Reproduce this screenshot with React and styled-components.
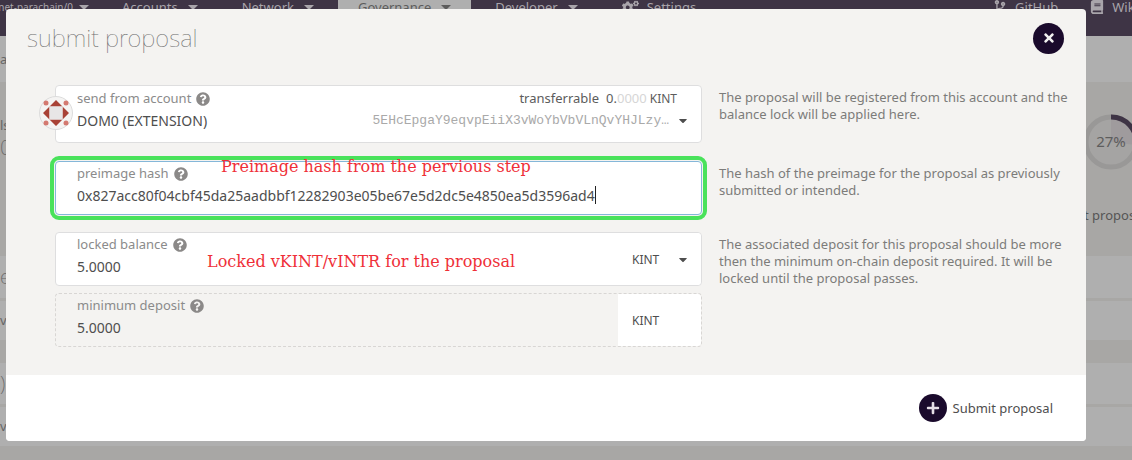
import React from "react";
import styled, { createGlobalStyle, css } from "styled-components";
import {
  FaBook,
  FaCaretDown,
  FaCodeBranch,
  FaCogs,
  FaPlus,
  FaQuestionCircle,
  FaTimes,
} from "react-icons/fa";

const GlobalStyle = createGlobalStyle`
  *, *::before, *::after { box-sizing: border-box; }
  body {
    margin: 0;
    background: #a8a7a5;
    color: #4e4e4e;
    font-family: "Noto Sans", "Open Sans", sans-serif;
    font-size: 13px;
    line-height: 17px;
    overflow: hidden;
  }
  button, input, select { font: inherit; color: inherit; }
`;

/* ---------- page behind the dialog ---------- */

const Page = styled.div`
  position: relative;
  min-height: 100vh;
  overflow: hidden;
`;

const Nav = styled.nav`
  display: flex;
  height: 36px;
  background: #3e3445;
  color: #a9a5ab;
`;

const NavLink = styled.a`
  display: flex;
  gap: ${(p) => (p.$icon ? 8 : 10)}px;
  height: 14px;
  align-items: center;
  margin-right: 4px;
  padding: 0 20px;
  color: inherit;
  text-decoration: none;
  white-space: nowrap;
  ${(p) =>
    p.$active &&
    css`
      height: 100%;
      padding-bottom: 22px;
      background: #afafaf;
      color: #5c5c5c;
    `}
`;

const ChainLink = styled(NavLink)`
  justify-content: flex-end;
  width: 98px;
  padding: 0 9px 0 0;
  gap: 6px;
  font-size: 10px;
`;

const NavEnd = styled.div`
  display: flex;
  margin-left: auto;
  margin-right: -24px;

  ${NavLink} {
    padding: 0 14px;
  }
`;

const Arrow = styled.span`
  border: 5px solid transparent;
  border-top-color: currentColor;
  border-bottom: 0;
`;

const Strip = styled.div`
  display: flex;
  align-items: center;
  height: ${(p) => p.$height}px;
  margin-bottom: ${(p) => p.$gap || 0}px;
  background: #afafaf;
  color: #666;
`;

const Thin = styled.span`
  font-size: 20px;
  font-weight: 200;
  line-height: 28px;
`;

const Summary = styled.section`
  display: flex;
  justify-content: space-between;
  height: 174px;
  color: #666;
`;

const SummaryStart = styled.div`
  padding-top: 35px;
`;

const SummaryEnd = styled.div`
  display: flex;
  flex-direction: column;
  width: 48px;
  padding-top: 32px;
  white-space: nowrap;
  gap: 37px;
  color: #555;
`;

const Gauge = styled.svg`
  width: 56px;
  height: 56px;
  flex: none;
`;

/* ---------- dialog ---------- */

const Dialog = styled.form`
  position: absolute;
  top: 9px;
  left: 6px;
  right: 46px;
  border-radius: 4px;
  overflow: hidden;
  background: #f4f3f1;
`;

const Header = styled.header`
  display: flex;
  align-items: center;
  justify-content: space-between;
  height: 58px;
  padding: 0 22px 0 21px;
`;

const Title = styled.h1`
  margin: 0;
  color: #6e6e6e;
  font-size: 24px;
  font-weight: 100;
  line-height: 30px;
`;

const RoundButton = styled.button`
  display: grid;
  place-items: center;
  width: 31px;
  height: 31px;
  padding: 0;
  border: 0;
  border-radius: 50%;
  background: #1a0a2c;
  color: #eee;
  font-size: 14px;
`;

const Body = styled.div`
  padding: 18px 14px 28px 49px;
`;

const Row = styled.div`
  display: grid;
  grid-template-columns: 647fr 353fr;
  column-gap: 17px;
  margin-bottom: ${(p) => p.$gap}px;
`;

const Help = styled.p`
  margin: 0;
  padding-top: 4px;
  color: #7c7c7a;
`;

const Stack = styled.div`
  display: grid;
  gap: 7px;
`;

const Field = styled.div`
  position: relative;
  display: flex;
  height: ${(p) => p.$height || 54}px;
  border: 1px ${(p) => (p.$readOnly ? "dashed #d8d6d4" : "solid #dededf")};
  border-radius: 4px;
  background: ${(p) => (p.$readOnly ? "transparent" : "#fff")};
  ${(p) =>
    p.$focused &&
    css`
      border-color: #85b7d9;
      outline: 4px solid #49e25b;
      outline-offset: 1px;
    `}
`;

const FieldMain = styled.div`
  flex: 1;
  min-width: 0;
  padding: ${(p) => p.$top || 3}px 0 0 21px;
`;

const LabelRow = styled.div`
  display: flex;
  align-items: center;
  gap: 5px;
  color: #8b8b8b;
`;

const HelpIcon = styled(FaQuestionCircle)`
  font-size: 14px;
  color: #8b8988;
`;

const ValueRow = styled.div`
  display: flex;
  align-items: center;
  height: 26px;
  font-size: 14px;
`;

const TextInput = styled.input`
  field-sizing: content;
  padding: 0;
  border: 0;
  outline: 0;
  background: transparent;
`;

const TextCursor = styled.span`
  width: 1px;
  height: 18px;
  background: #222;
`;

const Balance = styled.span`
  display: flex;
  gap: 3px;
  margin-left: auto;
  padding-right: 24px;
  color: #5c5c5c;
`;

const Amount = styled.span`
  margin-left: 4px;
`;

const Decimals = styled.span`
  color: #d6d6d6;
`;

const Unit = styled.span`
  font-size: 12px;
`;

const AccountSelect = styled.select`
  flex: 1;
  min-width: 0;
  padding: 0;
  border: 0;
  appearance: none;
  background: transparent;
`;

const Address = styled.span`
  color: #a9a9a9;
  font-family: "Liberation Mono", monospace;
  font-size: 13px;
`;

const DropCaret = styled(FaCaretDown)`
  flex: none;
  width: 12px;
  margin: 0 12px 0 8px;
  font-size: 13px;
`;

const UnitBox = styled.div`
  display: flex;
  align-items: center;
  width: 83px;
  padding-left: 14px;
  border-radius: 0 4px 4px 0;
  background: #fff;
  font-size: 12px;
`;

const UnitSelect = styled.select`
  flex: 1;
  min-width: 0;
  padding: 0;
  border: 0;
  appearance: none;
  background: transparent;
`;

const Avatar = styled.svg`
  position: absolute;
  left: -17px;
  top: 10px;
  width: 34px;
  height: 34px;
`;

const Note = styled.span`
  position: absolute;
  left: ${(p) => p.$left}px;
  top: ${(p) => p.$top}px;
  color: #ef2f38;
  font-family: "DejaVu Serif", serif;
  font-size: 16px;
  line-height: 20px;
  white-space: nowrap;
  pointer-events: none;
`;

const Footer = styled.footer`
  display: flex;
  justify-content: flex-end;
  height: 66px;
  padding-right: 33px;
  background: #fff;
`;

const SubmitButton = styled.button`
  display: flex;
  align-items: center;
  gap: 6px;
  padding: 0;
  border: 0;
  background: none;
`;

const SubmitIcon = styled.span`
  display: grid;
  place-items: center;
  width: 28px;
  height: 28px;
  border-radius: 50%;
  background: #1a0a2c;
  color: #e6dfe8;
  font-size: 14px;
`;

function FieldLabel({ id, children, aside }) {
  return (
    <LabelRow>
      <label htmlFor={id}>{children}</label>
      <HelpIcon />
      {aside}
    </LabelRow>
  );
}

function AccountIcon() {
  return (
    <Avatar viewBox="0 0 34 34" aria-hidden="true">
      <circle cx="17" cy="17" r="16.5" fill="#f5f4f3" stroke="#dcdcdc" />
      <path d="M10.5 10.5 17 4l6.5 6.5ZM10.5 23.5h13L17 30ZM10.5 10.5v13L4 17ZM23.5 10.5v13L30 17Z" fill="#a94236" />
      <path d="M10.5 10.5h13v13h-13z" fill="#e8e6e6" />
      <g fill="#d47970">
        <circle cx="7" cy="7" r="2.5" />
        <circle cx="27" cy="7" r="2.5" />
        <circle cx="7" cy="27" r="2.5" />
        <circle cx="27" cy="27" r="2.5" />
      </g>
    </Avatar>
  );
}

function MenuLink({ children, active }) {
  return (
    <NavLink href="#" $active={active}>
      {children}
      <Arrow />
    </NavLink>
  );
}

export default function App() {
  return (
    <>
      <GlobalStyle />
      <Page>
        <Nav>
          <ChainLink href="#">
            net-parachain/0
            <Arrow />
          </ChainLink>
          <MenuLink>Accounts</MenuLink>
          <MenuLink>Network</MenuLink>
          <MenuLink active>Governance</MenuLink>
          <MenuLink>Developer</MenuLink>
          <NavLink href="#" $icon>
            <FaCogs size={17} />
            Settings
          </NavLink>
          <NavEnd>
            <NavLink href="#" $icon>
              <FaCodeBranch size={14} />
              GitHub
            </NavLink>
            <NavLink href="#" $icon>
              <FaBook size={14} />
              Wiki
            </NavLink>
          </NavEnd>
        </Nav>
        <Strip $height={46}>a</Strip>
        <Summary>
          <SummaryStart>
            <div>ls</div>
            <Thin>0</Thin>
          </SummaryStart>
          <SummaryEnd>
            <Gauge viewBox="0 0 56 56">
              <circle cx="27" cy="28" r="25" fill="#a5a4a3" stroke="#999897" strokeWidth="5" />
              <path d="M27 28V3a25 25 0 0 1 25 28z" fill="#9f9b9d" />
              <path d="M27 3a25 25 0 0 1 25 28" fill="none" stroke="#3e3445" strokeWidth="5" />
              <text x="27" y="33" textAnchor="middle" fontSize="15" fill="#5d5d5d">27%</text>
            </Gauge>
            <span>t proposal</span>
          </SummaryEnd>
        </Summary>
        <Strip $height={42} $gap={3}>
          <Thin>e</Thin>
        </Strip>
        <Strip $height={39} $gap={23}>ve</Strip>
        <Strip $height={41} $gap={3}>
          <Thin>)</Thin>
        </Strip>
        <Strip $height={39}>ve</Strip>

        <Dialog role="dialog" aria-labelledby="dialog-title" onSubmit={(e) => e.preventDefault()}>
          <Header>
            <Title id="dialog-title">submit proposal</Title>
            <RoundButton type="button" aria-label="Close">
              <FaTimes />
            </RoundButton>
          </Header>
          <Body>
            <Row $gap={18}>
              <Field $height={58}>
                <AccountIcon />
                <FieldMain $top={4}>
                  <FieldLabel
                    id="account"
                    aside={
                      <Balance>
                        transferrable
                        <Amount>
                          0.<Decimals>0000</Decimals>
                        </Amount>
                        <Unit>KINT</Unit>
                      </Balance>
                    }
                  >
                    send from account
                  </FieldLabel>
                  <ValueRow>
                    <AccountSelect id="account">
                      <option>DOM0 (EXTENSION)</option>
                    </AccountSelect>
                    <Address>5EHcEpgaY9eqvpEiiX3vWoYbVbVLnQvYHJLzy…</Address>
                    <DropCaret />
                  </ValueRow>
                </FieldMain>
              </Field>
              <Help>
                The proposal will be registered from this account and the balance lock will be
                applied here.
              </Help>
            </Row>
            <Row $gap={17}>
              <Field $focused>
                <FieldMain>
                  <FieldLabel id="hash">preimage hash</FieldLabel>
                  <ValueRow>
                    <TextInput
                      id="hash"
                      defaultValue="0x827acc80f04cbf45da25aadbbf12282903e05be67e5d2dc5e4850ea5d3596ad4"
                    />
                    <TextCursor />
                  </ValueRow>
                </FieldMain>
                <Note $left={165} $top={-5}>Preimage hash from the pervious step</Note>
              </Field>
              <Help>The hash of the preimage for the proposal as previously submitted or intended.</Help>
            </Row>
            <Row $gap={0}>
              <Stack>
                <Field>
                  <FieldMain>
                    <FieldLabel id="locked">locked balance</FieldLabel>
                    <ValueRow>
                      <TextInput id="locked" defaultValue="5.0000" />
                    </ValueRow>
                  </FieldMain>
                  <UnitBox>
                    <UnitSelect aria-label="Unit">
                      <option>KINT</option>
                    </UnitSelect>
                    <DropCaret />
                  </UnitBox>
                  <Note $left={151} $top={19}>Locked vKINT/vINTR for the proposal</Note>
                </Field>
                <Field $readOnly>
                  <FieldMain>
                    <FieldLabel id="minimum">minimum deposit</FieldLabel>
                    <ValueRow>
                      <TextInput id="minimum" defaultValue="5.0000" readOnly />
                    </ValueRow>
                  </FieldMain>
                  <UnitBox>KINT</UnitBox>
                </Field>
              </Stack>
              <Help>
                The associated deposit for this proposal should be more then the minimum on-chain
                deposit required. It will be locked until the proposal passes.
              </Help>
            </Row>
          </Body>
          <Footer>
            <SubmitButton type="submit">
              <SubmitIcon>
                <FaPlus />
              </SubmitIcon>
              Submit proposal
            </SubmitButton>
          </Footer>
        </Dialog>
      </Page>
    </>
  );
}
